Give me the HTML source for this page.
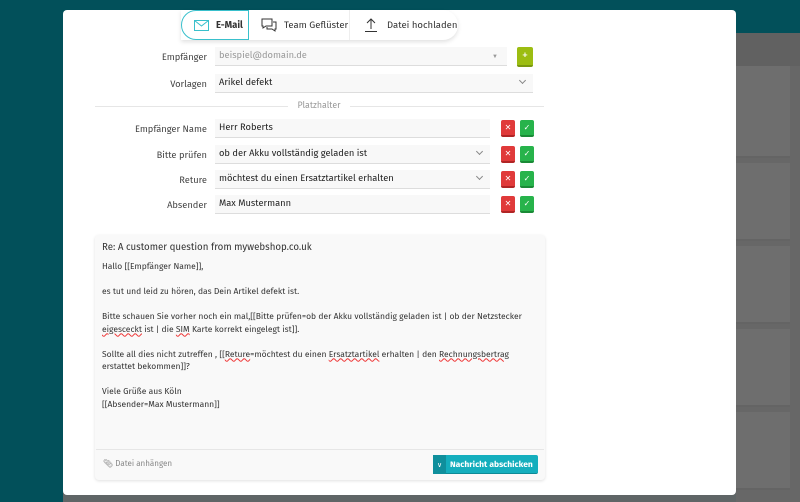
<!DOCTYPE html>
<html><head><meta charset="utf-8"><style>
*{box-sizing:border-box;margin:0;padding:0}
body{width:800px;height:502px;overflow:hidden;position:relative;background:#5f6566;font-family:"Fira Sans","Liberation Sans",sans-serif;font-size:9px;color:#333}
.side{position:absolute;left:0;top:0;width:63px;height:502px;background:#02505a}
.top{position:absolute;left:63px;top:0;width:737px;height:33px;background:#02505a}
.right{position:absolute;left:736px;top:33px;width:64px;height:469px;background:#676767}
.card{position:absolute;left:736px;width:54px;background:#6e6e6e;border-bottom:2px solid #646464}
.modal{position:absolute;left:63px;top:10px;width:673px;height:485px;background:#fff;border-radius:4px}
.tabs{position:absolute;left:181px;top:10px;width:277px;height:30px;background:#fff;border-radius:0 15px 15px 0;box-shadow:0 2px 4px rgba(0,0,0,.12);display:flex}
.tab{display:flex;align-items:center;height:30px;font-size:9.5px;color:#333;border-right:1px solid #eee}
.tab.act{border:1px solid #39c0cc;border-radius:15px 0 0 15px;font-weight:bold}
.lbl{position:absolute;width:120px;left:87px;text-align:right;font-size:9.3px;color:#444}
.inp{position:absolute;height:19px;background:#f8f8f8;border-bottom:1px solid #ddd;font-size:9.3px;padding-left:4px;line-height:18px;color:#222}
.btn{position:absolute;width:14px;height:17px;border-radius:2px;color:#fff;font-size:8px;text-align:center;line-height:17px}
.r{background:#e03a3a;border-bottom:2px solid #b02525}.g{background:#27b34b;border-bottom:2px solid #1a8a36}
.chev{position:absolute;right:8px;top:4px;width:5px;height:5px;border-right:1px solid #888;border-bottom:1px solid #888;transform:rotate(45deg)}
.ed{position:absolute;left:95px;top:235px;width:450px;height:245px;background:#f9f9f9;border-radius:4px;box-shadow:0 1px 3px rgba(0,0,0,.12)}
.body{position:absolute;left:102px;top:261px;font-size:8.5px;line-height:12.5px;color:#333}
u{text-decoration:underline wavy #e33;text-decoration-thickness:1px}
</style></head><body>
<div class="side"></div><div class="top"></div><div class="right"></div>
<div style="position:absolute;left:736px;top:33px;width:64px;height:33px;background:#616161"></div>
<div class="card" style="top:66px;height:92px"></div>
<div class="card" style="top:163px;height:78px"></div>
<div class="card" style="top:246px;height:78px"></div>
<div class="card" style="top:329px;height:78px"></div>
<div class="card" style="top:412px;height:78px"></div>
<div class="modal"></div>
<div class="tabs">
 <div class="tab act" style="width:68px;padding-left:12px"><svg width="15" height="11" viewBox="0 0 15 11" style="margin-right:7px"><rect x=".5" y=".5" width="14" height="10" fill="none" stroke="#39c0cc"/><path d="M.5 .5L7.5 6 14.5 .5" fill="none" stroke="#39c0cc"/></svg>E-Mail</div>
 <div class="tab" style="width:101px;padding-left:12px"><svg width="16" height="14" viewBox="0 0 16 14" style="margin-right:7px"><path d="M1 1h10v7H5l-3 2V8H1z" fill="none" stroke="#333"/><path d="M12 4h3v7h-1v2l-3-2H6V9" fill="none" stroke="#333"/></svg>Team Geflüster</div>
 <div class="tab" style="width:108px;padding-left:15px;border:none"><svg width="12" height="14" viewBox="0 0 12 14" style="margin-right:10px"><path d="M6 11V1M2 5l4-4 4 4M0 13.5h12" fill="none" stroke="#333"/></svg>Datei hochladen</div>
</div>
<div class="lbl" style="top:52px">Empfänger</div>
<div class="inp" style="left:215px;top:47px;width:292px;color:#999">beispiel@domain.de<span style="position:absolute;right:9px;top:0;font-size:6px;color:#999">▼</span></div>
<div class="btn" style="left:517px;top:47px;width:16px;height:20px;line-height:19px;background:#9cbd12;border-bottom:2px solid #7a9810;font-size:12px">+</div>
<div class="lbl" style="top:79px">Vorlagen</div>
<div class="inp" style="left:215px;top:74px;width:318px">Arikel defekt<div class="chev"></div></div>
<div style="position:absolute;left:95px;top:106px;width:193px;height:1px;background:#e6e6e6"></div>
<div style="position:absolute;left:350px;top:106px;width:194px;height:1px;background:#e6e6e6"></div>
<div style="position:absolute;left:288px;top:101px;width:62px;text-align:center;color:#999;font-size:8.8px">Platzhalter</div>
<div class="lbl" style="top:124px">Empfänger Name</div>
<div class="inp" style="left:215px;top:119px;width:275px">Herr Roberts</div>
<div class="lbl" style="top:150px">Bitte prüfen</div>
<div class="inp" style="left:215px;top:145px;width:275px">ob der Akku vollständig geladen ist<div class="chev"></div></div>
<div class="lbl" style="top:175px">Reture</div>
<div class="inp" style="left:215px;top:170px;width:275px">möchtest du einen Ersatztartikel erhalten<div class="chev"></div></div>
<div class="lbl" style="top:200px">Absender</div>
<div class="inp" style="left:215px;top:195px;width:275px">Max Mustermann</div>
<div class="btn r" style="left:501px;top:120px">✕</div><div class="btn g" style="left:520px;top:120px">✓</div>
<div class="btn r" style="left:501px;top:146px">✕</div><div class="btn g" style="left:520px;top:146px">✓</div>
<div class="btn r" style="left:501px;top:171px">✕</div><div class="btn g" style="left:520px;top:171px">✓</div>
<div class="btn r" style="left:501px;top:196px">✕</div><div class="btn g" style="left:520px;top:196px">✓</div>
<div class="ed"></div>
<div style="position:absolute;left:102px;top:241px;font-size:9.7px;color:#333">Re: A customer question from mywebshop.co.uk</div>
<div class="body">Hallo [[Empfänger Name]],<br><br>es tut und leid zu hören, das Dein Artikel defekt ist.<br><br>Bitte schauen Sie vorher noch ein mal,[[Bitte prüfen=ob der Akku vollständig geladen ist | ob der Netzstecker<br><u>eigesceckt</u> ist | die <u>SIM</u> Karte korrekt eingelegt ist]].<br><br>Sollte all dies nicht zutreffen , [[<u>Reture</u>=möchtest du einen <u>Ersatztartikel</u> erhalten | den <u>Rechnungsbertrag</u><br>erstattet bekommen]]?<br><br>Viele Grüße aus Köln<br>[[Absender=Max Mustermann]]</div>
<div style="position:absolute;left:96px;top:449px;width:448px;height:1px;background:#e6e6e6"></div>
<div style="position:absolute;left:103px;top:459px;font-size:8px;color:#888">📎︎ Datei anhängen</div>
<div style="position:absolute;left:433px;top:455px;width:105px;height:19px;background:#14aebd;border-radius:2px;color:#fff;font-size:8.5px;font-weight:bold;line-height:19px;border-bottom:1px solid #0d8a96"><span style="display:inline-block;width:13px;height:19px;background:#0f8f9c;text-align:center;font-weight:normal;font-size:7px;margin-right:4px">∨</span>Nachricht abschicken</div>
</body></html>
